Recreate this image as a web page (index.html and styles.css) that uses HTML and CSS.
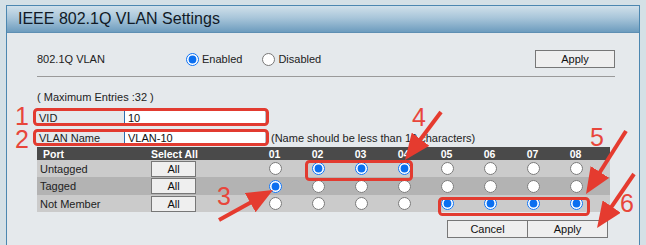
FILE: index.html
```html
<!DOCTYPE html>
<html lang="en">
<head>
    <link rel="stylesheet" href="styles.css">
</head>
<body>
    <div class="panel">
        <div class="panel-title">IEEE 802.1Q VLAN Settings</div>

        <div class="panel-body">
            <div class="state-row">
                <span class="state-label">802.1Q VLAN</span>
                <label class="opt"><input type="radio" name="state" checked>Enabled</label>
                <label class="opt"><input type="radio" name="state">Disabled</label>
                <button class="btn btn-top">Apply</button>
            </div>
            <div class="divider"></div>

            <div class="max-entries">( Maximum Entries :32 )</div>

            <div class="field-row">
                <span class="field-label">VID</span>
                <input class="field-input" value="10">
            </div>
            <div class="field-row">
                <span class="field-label">VLAN Name</span>
                <input class="field-input" value="VLAN-10">
                <span class="field-hint">(Name should be less than 10 characters)</span>
            </div>

            <div class="port-table">
                <div class="port-row port-head">
                    <span class="cell-name">Port</span>
                    <span class="cell-all">Select All</span>
                    <span class="cell-port">01</span>
                    <span class="cell-port">02</span>
                    <span class="cell-port">03</span>
                    <span class="cell-port">04</span>
                    <span class="cell-port">05</span>
                    <span class="cell-port">06</span>
                    <span class="cell-port">07</span>
                    <span class="cell-port">08</span>
                    <span></span>
                </div>
                <div class="port-row" id="rowU"></div>
                <div class="port-row row-dark" id="rowT"></div>
                <div class="port-row" id="rowN"></div>
            </div>

            <div class="actions">
                <button class="btn btn-action">Cancel</button>
                <button class="btn btn-action btn-join">Apply</button>
            </div>
        </div>
    </div>

    <svg class="marks" width="646" height="245" viewBox="0 0 646 245">
        <defs>
            <marker id="head" markerUnits="userSpaceOnUse" markerWidth="26" markerHeight="22"
                    viewBox="0 0 26 22" refX="2" refY="11" orient="auto">
                <path d="M0,0 L26,11 L0,22 z" fill="#e53b2f"/>
            </marker>
        </defs>

        <!-- boxes -->
        <rect x="34.5" y="109.5" width="233" height="15" rx="3" class="box"/>
        <rect x="34.5" y="130.5" width="233" height="14" rx="3" class="box"/>
        <rect x="306.5" y="161.5" width="105" height="18" rx="3" class="box"/>
        <rect x="439.5" y="198.5" width="149" height="16" rx="3" class="box"/>

        <!-- arrows -->
        <line x1="219" y1="220" x2="252" y2="201.7" class="arrow"/>
        <line x1="441" y1="112" x2="419.4" y2="140.8" class="arrow"/>
        <line x1="626" y1="131" x2="598.9" y2="173.7" class="arrow"/>
        <line x1="634" y1="174" x2="610.6" y2="208.2" class="arrow"/>

        <!-- step numbers -->
        <text x="15" y="125" class="step">1</text>
        <text x="15" y="148" class="step">2</text>
        <text x="217" y="205" class="step">3</text>
        <text x="412" y="126" class="step">4</text>
        <text x="590" y="146" class="step">5</text>
        <text x="620" y="212" class="step">6</text>
    </svg>

    <script>
        // which ports are set in each row
        const rows = {
            rowU: { label: 'Untagged', on: [2, 3, 4] },
            rowT: { label: 'Tagged', on: [1] },
            rowN: { label: 'Not Member', on: [5, 6, 7, 8] }
        };

        Object.keys(rows).forEach(id => {
            const row = rows[id];
            let html = `<span class="cell-name">${row.label}</span>`;
            html += `<span class="cell-all"><button class="btn btn-all">All</button></span>`;
            for (let p = 1; p <= 8; p++) {
                const checked = row.on.includes(p) ? ' checked' : '';
                html += `<span class="cell-port"><input type="radio" name="p${p}-${id}"${checked}></span>`;
            }
            html += '<span></span>';
            document.getElementById(id).innerHTML = html;
        });
    </script>
</body>
</html>
```

FILE: styles.css
```css
body {
    margin: 0;
    background: #d4e0e6;
    font-family: 'Liberation Sans', Arial, sans-serif;
    font-size: 11px;
    color: #222;
    position: relative;
    width: 646px;
    height: 245px;
    overflow: hidden;
}

.panel {
    margin: 5px 0 0 6px;
    width: 632px;
    min-height: 240px;
    border: 1px solid #4c87b0;
    border-bottom: none;
    background: #e5e9ec;
}

.panel-title {
    height: 26px;
    line-height: 26px;
    padding-left: 11px;
    font-size: 16px;
    color: #111a26;
    background: linear-gradient(180deg, #d0e0ea 0%, #a9c6da 45%, #6d9cbe 100%);
    border-bottom: 1px solid #5e8fb3;
}

.panel-body {
    padding-left: 30px;
}

.state-row {
    display: flex;
    align-items: center;
    width: 578px;
    height: 18px;
    margin-top: 17px;
}

.state-label {
    width: 149px;
}

.opt {
    display: flex;
    align-items: center;
    gap: 3px;
    margin-right: 20px;
}

input[type="radio"] {
    margin: 0;
    width: 13px;
    height: 13px;
    accent-color: #0b6ff0;
}

.btn {
    font-family: inherit;
    font-size: 11px;
    color: #111;
    background: #efefef;
    border: 1px solid #777;
    padding: 0;
    cursor: pointer;
}

.btn-top {
    margin-left: auto;
    width: 80px;
    height: 18px;
}

.divider {
    width: 578px;
    height: 1px;
    background: #9a9a9a;
    margin-top: 8px;
}

.max-entries {
    margin-top: 13px;
    line-height: 14px;
}

.field-row {
    display: flex;
    align-items: center;
    height: 15px;
    margin-top: 6px;
}

.field-row + .field-row {
    margin-top: 5px;
}

.field-label {
    width: 87px;
    padding-left: 2px;
    box-sizing: border-box;
}

.field-input {
    width: 142px;
    height: 15px;
    box-sizing: border-box;
    border: 1px solid #b8c2cc;
    border-left-color: #2f6fb0;
    padding: 0 3px;
    font-family: inherit;
    font-size: 11px;
    color: #111;
    background: #fff;
    outline: none;
}

.field-hint {
    margin-left: 5px;
}

.port-table {
    width: 573px;
    margin-top: 2px;
}

.port-row {
    display: grid;
    grid-template-columns: 114px 103px repeat(8, 43px) 12px;
    align-items: center;
    height: 17px;
    background: #cbcbcb;
}

.row-dark {
    background: #b3b3b3;
    height: 18px;
}

.port-head {
    height: 13px;
    background: #4a4a4a;
    color: #fff;
    font-weight: bold;
    font-size: 10.5px;
}

.cell-name {
    padding-left: 3px;
}

.port-head .cell-name {
    padding-left: 6px;
}

.cell-port {
    display: flex;
    justify-content: center;
}

.port-head .cell-port {
    display: block;
    text-align: center;
    padding-right: 2px;
}

.btn-all {
    width: 45px;
    height: 16px;
    display: block;
}

.actions {
    display: flex;
    justify-content: flex-end;
    width: 571px;
    margin-top: 8px;
}

.btn-action {
    width: 81px;
    height: 18px;
}

.btn-join {
    margin-left: -1px;
}

.marks {
    position: absolute;
    left: 0;
    top: 0;
    pointer-events: none;
}

.box {
    fill: none;
    stroke: #e23b30;
    stroke-width: 3;
}

.arrow {
    stroke: #e53b2f;
    stroke-width: 4;
    marker-end: url(#head);
}

.step {
    font-family: 'Liberation Sans', Arial, sans-serif;
    font-size: 25px;
    fill: #e8463b;
}
```
